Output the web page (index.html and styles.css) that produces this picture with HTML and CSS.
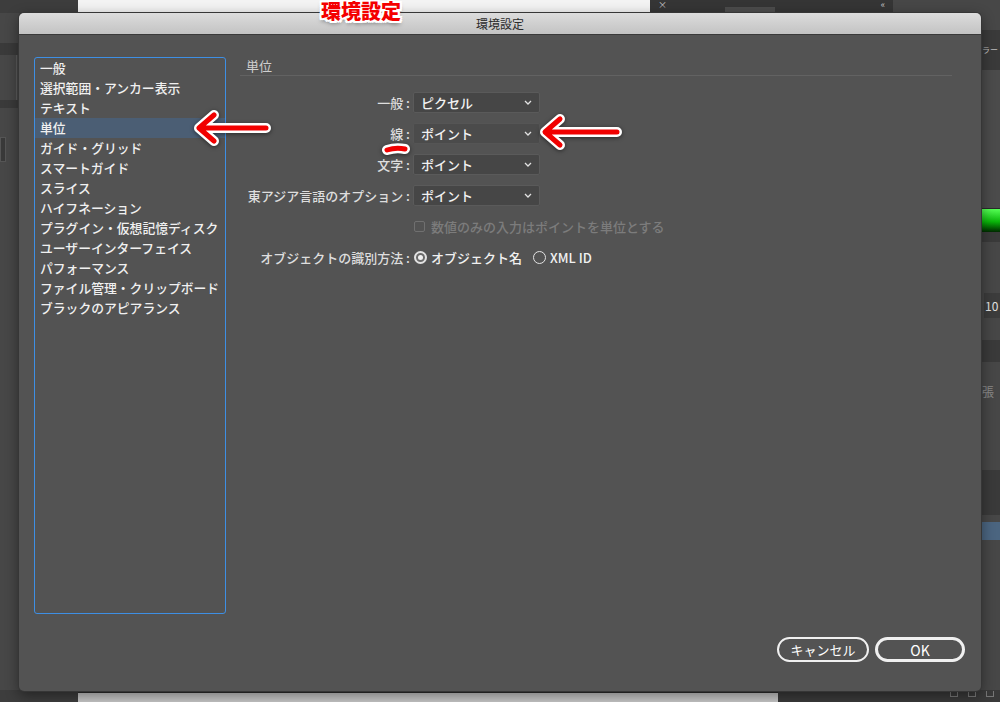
FILE: index.html
```html
<!DOCTYPE html>
<html lang="ja">
<head>
<meta charset="UTF-8">
<meta name="viewport" content="width=device-width, initial-scale=1.0">
<title>環境設定</title>
<link rel="stylesheet" href="styles.css">
</head>
<body>

<div class="desktop">
    <div class="top-strip">
        <div class="seg seg-dark"></div>
        <div class="seg seg-white"></div>
        <div class="seg seg-panel">
            <span class="panel-close">×</span>
            <span class="panel-tab"></span>
            <span class="panel-collapse">«</span>
        </div>
        <div class="seg seg-gray"></div>
    </div>

    <div class="middle">
        <div class="side side-left">
            <div class="band" style="height: 30px"></div>
            <div class="band band-dark" style="height: 12px"></div>
            <div class="band band-line" style="height: 45px"></div>
            <div class="band band-dark" style="height: 8px"></div>
            <div class="band" style="height: 29px"></div>
            <div class="band band-icon" style="height: 25px"></div>
            <div class="band band-fill"></div>
        </div>
        <div class="canvas"></div>
        <div class="side side-right">
            <div class="band" style="height: 17px"></div>
            <div class="band band-dark band-text" style="height: 40px">ラー</div>
            <div class="band band-light" style="height: 138px"></div>
            <div class="band band-green" style="height: 24px"></div>
            <div class="band band-dark" style="height: 10px"></div>
            <div class="band" style="height: 51px"></div>
            <div class="band band-field" style="height: 25px">10</div>
            <div class="band" style="height: 22px"></div>
            <div class="band band-dark" style="height: 22px"></div>
            <div class="band band-text band-faint" style="height: 108px">張</div>
            <div class="band band-dark" style="height: 45px"></div>
            <div class="band" style="height: 7px"></div>
            <div class="band band-blue" style="height: 18px"></div>
            <div class="band band-fill"></div>
        </div>
    </div>

    <div class="bottom-strip">
        <div class="seg seg-dark"></div>
        <div class="seg seg-scroll"></div>
        <div class="seg seg-tools"><span class="tool"></span><span class="tool"></span><span class="tool"></span></div>
    </div>

    <div class="dialog">
        <div class="titlebar">環境設定</div>
        <div class="dialog-body">
            <div class="content">
                <ul class="category-list">
                    <li>一般</li>
                    <li>選択範囲・アンカー表示</li>
                    <li>テキスト</li>
                    <li class="selected">単位</li>
                    <li>ガイド・グリッド</li>
                    <li>スマートガイド</li>
                    <li>スライス</li>
                    <li>ハイフネーション</li>
                    <li>プラグイン・仮想記憶ディスク</li>
                    <li>ユーザーインターフェイス</li>
                    <li>パフォーマンス</li>
                    <li>ファイル管理・クリップボード</li>
                    <li>ブラックのアピアランス</li>
                </ul>

                <div class="panel">
                    <div class="panel-title">単位</div>
                    <div class="form">
                        <div class="label">一般 :</div>
                        <div class="select">ピクセル<svg class="chevron" viewBox="0 0 8 5"><path d="M1 1 L4 4 L7 1"/></svg></div>

                        <div class="label">線 :</div>
                        <div class="select select-hover">ポイント<svg class="chevron" viewBox="0 0 8 5"><path d="M1 1 L4 4 L7 1"/></svg></div>

                        <div class="label">文字 :</div>
                        <div class="select">ポイント<svg class="chevron" viewBox="0 0 8 5"><path d="M1 1 L4 4 L7 1"/></svg></div>

                        <div class="label">東アジア言語のオプション :</div>
                        <div class="select">ポイント<svg class="chevron" viewBox="0 0 8 5"><path d="M1 1 L4 4 L7 1"/></svg></div>

                        <div class="option-check"><span class="checkbox"></span>数値のみの入力はポイントを単位とする</div>

                        <div class="label">オブジェクトの識別方法 :</div>
                        <div class="radios">
                            <span class="radio checked"></span><span class="radio-label">オブジェクト名</span>
                            <span class="radio"></span><span class="radio-label">XML ID</span>
                        </div>
                    </div>
                </div>
            </div>

            <div class="buttons">
                <button class="btn" type="button">キャンセル</button>
                <button class="btn btn-default" type="button">OK</button>
            </div>
        </div>
    </div>

    <svg class="marks" viewBox="0 0 1000 702">
        <g class="mark-outline">
            <path d="M266 128 H200 M214 115 L199 128 L214 141"/>
            <path d="M617 132 H546 M560 119 L545 132 L560 145"/>
            <path d="M387 150 Q396 147 405 149"/>
        </g>
        <g class="mark-red">
            <path d="M266 128 H200 M214 115 L199 128 L214 141"/>
            <path d="M617 132 H546 M560 119 L545 132 L560 145"/>
            <path d="M387 150 Q396 147 405 149"/>
        </g>
    </svg>
    <div class="caption">環境設定</div>
</div>

</body>
</html>
```

FILE: styles.css
```css
* {
    box-sizing: border-box;
}

html, body {
    margin: 0;
    padding: 0;
}

body {
    width: 1000px;
    height: 702px;
    overflow: hidden;
    background-color: #444;
    font-family: "Noto Sans CJK JP", "Noto Sans", sans-serif;
}

.desktop {
    position: relative;
    width: 1000px;
    height: 702px;
    display: flex;
    flex-direction: column;
}

/* background app */
.top-strip {
    height: 13px;
    display: flex;
}

.seg-dark {
    width: 78px;
    background-color: #3d3d3d;
}

.seg-white {
    width: 572px;
    background-color: #f3f3f3;
}

.seg-panel {
    width: 243px;
    background-color: #353535;
    display: flex;
    align-items: flex-start;
    padding: 0 8px;
    color: #c8c8c8;
    font-size: 9px;
    line-height: 10px;
}

.panel-tab {
    width: 50px;
    height: 6px;
    margin-top: 7px;
    margin-left: 58px;
    background-color: #4c4c4c;
}

.panel-collapse {
    margin-left: auto;
}

.seg-gray {
    flex: 1;
    background-color: #474747;
}

.middle {
    height: 677px;
    display: flex;
}

.side {
    width: 19px;
    display: flex;
    flex-direction: column;
    background-color: #474747;
    overflow: hidden;
}

.band {
    background-color: #474747;
    flex-shrink: 0;
}

.band-dark {
    background-color: #3a3a3a;
}

.band-light {
    background-color: #4b4b4b;
}

.band-line {
    border-right: 1px solid #5c5c5c;
    margin-right: 2px;
}

.band-icon {
    width: 6px;
    background-color: #393939;
    border: 1px solid #555;
}

.band-fill {
    flex: 1;
}

.band-text {
    color: #bdbdbd;
    font-size: 8px;
    line-height: 40px;
    padding-left: 1px;
    white-space: nowrap;
}

.band-faint {
    color: #8a8a8a;
    font-size: 12px;
    line-height: 60px;
}

.band-green {
    background: linear-gradient(#55ff55, #0ab60a 55%, #002a00);
    border-top: 1px solid #2a2a2a;
}

.band-field {
    margin-left: 3px;
    background-color: #3c3c3c;
    color: #e0e0e0;
    font-size: 12px;
    line-height: 25px;
    padding-left: 1px;
}

.band-blue {
    background-color: #4b6580;
}

.canvas {
    flex: 1;
    background-color: #444;
}

.bottom-strip {
    height: 12px;
    display: flex;
}

.seg-scroll {
    width: 700px;
    background-color: #c6c6c6;
    border-top: 3px solid #2e2e2e;
}

.seg-tools {
    flex: 1;
    background-color: #3a3a3a;
    display: flex;
    justify-content: flex-end;
    gap: 10px;
    padding: 1px 6px 0 0;
}

.tool {
    width: 8px;
    height: 6px;
    border: 1px solid #777;
    border-top: none;
}

/* dialog */
.dialog {
    position: absolute;
    left: 19px;
    top: 13px;
    width: 962px;
    height: 678px;
    display: flex;
    flex-direction: column;
    background-color: #535353;
    border-radius: 5px;
    overflow: hidden;
    box-shadow: 0 0 0 1px #363636, 0 4px 14px rgba(0, 0, 0, 0.45);
}

.titlebar {
    height: 22px;
    line-height: 21px;
    text-align: center;
    font-size: 12px;
    color: #2b2b2b;
    background: linear-gradient(#dcdcdc, #c3c3c3);
    border-bottom: 1px solid #3a3a3a;
}

.dialog-body {
    flex: 1;
    display: flex;
    flex-direction: column;
    padding: 22px 16px 28px 15px;
}

.content {
    display: flex;
    gap: 14px;
    height: 557px;
}

.category-list {
    width: 192px;
    height: 557px;
    margin: 0;
    padding: 0;
    list-style: none;
    border: 1px solid #3e8fe4;
    border-radius: 3px;
}

.category-list li {
    height: 20px;
    line-height: 20px;
    padding-left: 5px;
    font-size: 12.8px;
    font-weight: 500;
    color: #f0f0f0;
    white-space: nowrap;
}

.category-list li.selected {
    background-color: #4b5e74;
}

.panel {
    width: 712px;
}

.panel-title {
    height: 19px;
    line-height: 18px;
    padding-left: 6px;
    font-size: 13px;
    color: #cfcfcf;
    border-bottom: 1px solid #626262;
}

.form {
    margin-top: 16px;
    display: grid;
    grid-template-columns: 170px 127px;
    grid-auto-rows: 21px;
    row-gap: 10px;
    column-gap: 3px;
    align-items: center;
}

.label {
    text-align: right;
    font-size: 13px;
    font-weight: 500;
    color: #dedede;
    white-space: nowrap;
}

.select {
    height: 21px;
    display: flex;
    align-items: center;
    justify-content: space-between;
    padding: 0 7px;
    font-size: 13px;
    font-weight: 500;
    color: #f2f2f2;
    background-color: #464646;
    border: 1px solid #5a5a5a;
    border-radius: 2px;
}

.select-hover {
    background-color: #4b4b4b;
    border-color: #555;
}

.chevron {
    width: 8px;
    height: 5px;
    flex-shrink: 0;
    fill: none;
    stroke: #e2e2e2;
    stroke-width: 1.3;
}

.option-check {
    grid-column: 2;
    display: flex;
    align-items: center;
    gap: 6px;
    padding-left: 1px;
    font-size: 13px;
    font-weight: 500;
    color: #7c7c7c;
    white-space: nowrap;
}

.checkbox {
    flex-shrink: 0;
    width: 11px;
    height: 11px;
    border: 1px solid #707070;
    border-radius: 2px;
}

.radios {
    display: flex;
    align-items: center;
    padding-left: 1px;
    white-space: nowrap;
}

.radio {
    flex-shrink: 0;
    width: 13px;
    height: 13px;
    border: 1.5px solid #e2e2e2;
    border-radius: 50%;
    display: flex;
    align-items: center;
    justify-content: center;
}

.radio.checked {
    border-width: 2px;
    background-color: #6a6a6a;
}

.radio.checked::after {
    content: "";
    width: 5px;
    height: 5px;
    border-radius: 50%;
    background-color: #f0f0f0;
}

.radio-label {
    flex-shrink: 0;
    margin: 0 11px 0 4px;
    font-size: 13px;
    font-weight: 500;
    color: #f0f0f0;
}

.buttons {
    margin-top: 23px;
    display: flex;
    justify-content: flex-end;
    gap: 6px;
}

.btn {
    width: 92px;
    height: 25px;
    padding: 0;
    border: 2px solid #f0f0f0;
    border-radius: 13px;
    background: transparent;
    color: #fff;
    font-family: inherit;
    font-size: 13px;
}

.btn-default {
    width: 90px;
    border-width: 3px;
    font-size: 14px;
}

/* red annotations */
.marks {
    position: absolute;
    left: 0;
    top: 0;
    width: 1000px;
    height: 702px;
    pointer-events: none;
}

.marks path {
    fill: none;
    stroke-linecap: round;
    stroke-linejoin: round;
}

.mark-outline {
    stroke: #fff;
    stroke-width: 10;
    filter: drop-shadow(0 1px 2px rgba(0, 0, 0, 0.5));
}

.mark-red {
    stroke: #f10000;
    stroke-width: 5;
}

.caption {
    position: absolute;
    left: 321px;
    top: 0;
    font-size: 20px;
    font-weight: 900;
    line-height: 22px;
    color: #f40000;
    text-shadow:
        2px 0 0 #fff, -2px 0 0 #fff, 0 2px 0 #fff, 0 -2px 0 #fff,
        2px 2px 0 #fff, -2px 2px 0 #fff, 2px -2px 0 #fff, -2px -2px 0 #fff,
        0 3px 4px rgba(0, 0, 0, 0.5);
}
```
